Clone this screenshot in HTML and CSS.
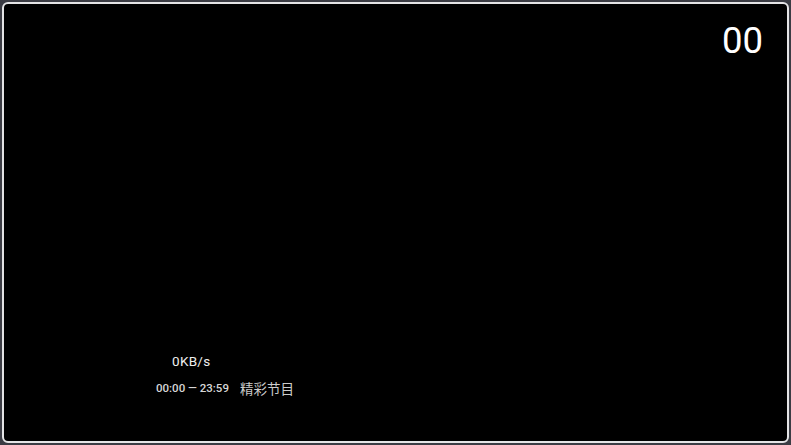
FILE: index.html
```html
<!DOCTYPE html>
<html>
<head>
<meta charset="utf-8">
<link rel="stylesheet" href="styles.css">
</head>
<body>
<div class="screen">
  <div class="top">
    <div class="channel">00</div>
  </div>
  <div class="info">
    <div class="speed">0KB/s</div>
    <div class="epg">
      <span class="time">00:00 — 23:59</span>
      <span class="title">精彩节目</span>
    </div>
  </div>
</div>
</body>
</html>
```

FILE: styles.css
```css
html, body {
  margin: 0;
  padding: 0;
  width: 791px;
  height: 445px;
  overflow: hidden;
  background: #3b3c44;
}
.screen {
  box-sizing: border-box;
  margin: 2px;
  width: 787px;
  height: 441px;
  border: 2px solid #e4e4e6;
  border-radius: 6px;
  background: #000;
  display: flex;
  flex-direction: column;
  justify-content: space-between;
  font-family: Roboto, "Noto Sans CJK SC", sans-serif;
  color: #fff;
}
.top {
  display: flex;
  justify-content: flex-end;
  padding: 15px 24px 0 0;
}
.channel {
  font-size: 36.5px;
  line-height: 44px;
  color: #fff;
}
.info {
  padding: 0 0 43px 152px;
  display: flex;
  flex-direction: column;
  align-items: flex-start;
}
.speed {
  margin-left: 16px;
  font-size: 13.5px;
  line-height: 16px;
  color: #eee;
  letter-spacing: 0.3px;
}
.epg {
  margin-top: 9px;
  display: flex;
  align-items: center;
  gap: 11px;
}
.time {
  font-size: 11.5px;
  font-weight: 500;
  color: #d6d6d6;
}
.title {
  font-size: 13.5px;
  color: #ccc;
}
```
